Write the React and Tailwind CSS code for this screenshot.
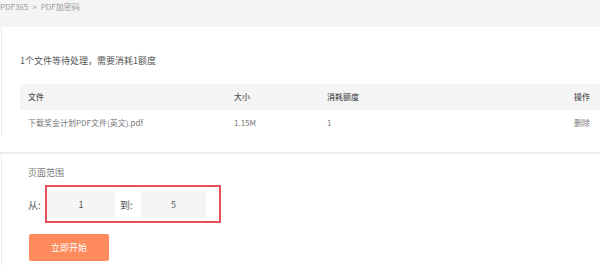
import React from 'react'

function App() {
  const files = [
    { name: '下载奖金计划PDF文件(英文).pdf', size: '1.15M', cost: '1' }
  ]

  return (
    <div className="w-[600px] h-[266px] overflow-hidden bg-white font-['Noto_Sans_CJK_SC','Noto_Sans',sans-serif]">
      {/* Breadcrumb */}
      <div className="h-[27px] bg-[#f4f4f4] text-[8px] leading-[14px] text-[#999] flex gap-[4px]">
        <span>PDF365</span>
        <span>&gt;</span>
        <span>PDF加密码</span>
      </div>

      <div className="ml-px border-l border-[#ececec]">
        {/* Files */}
        <div className="pt-[27px] pl-[18px]">
          <p className="text-[9px] leading-[14px] text-[#555]">1个文件等待处理，需要消耗1额度</p>

          <div className="mt-[16px]">
            <div className="h-[26px] bg-[#f5f5f5] flex items-center pl-[8px] pr-[10px] text-[8px] font-medium text-[#555]">
              <div className="w-[206px]">文件</div>
              <div className="w-[93px]">大小</div>
              <div className="flex-1">消耗额度</div>
              <div>操作</div>
            </div>
            {files.map((f) => (
              <div key={f.name} className="h-[26px] flex items-center pl-[8px] pr-[10px] text-[8px] text-[#777]">
                <div className="w-[206px]">{f.name}</div>
                <div className="w-[93px]">{f.size}</div>
                <div className="flex-1">{f.cost}</div>
                <div>删除</div>
              </div>
            ))}
          </div>
        </div>
      </div>

      <div className="mt-[16px] h-[2px] bg-[#ececec]" />

      {/* Page range */}
      <div className="ml-px border-l border-[#ececec] pl-[26px] pt-[12px] pb-[10px]">
        <p className="text-[9px] leading-[14px] text-[#777]">页面范围</p>

        <div className="mt-[5px] flex items-center">
          <span className="w-[17px] text-[10px] text-[#555]">从:</span>
          <div className="border-2 border-[#e8505a] pt-[4px] pb-[3px] pl-[0px] pr-[13px] flex items-center">
            <div className="w-[68px] h-[27px] bg-[#f5f5f5] flex items-center justify-center text-[9px] text-[#555]">1</div>
            <span className="ml-[5px] w-[21px] text-[10px] text-[#555]">到:</span>
            <div className="w-[65px] h-[27px] bg-[#f5f5f5] flex items-center justify-center text-[9px] text-[#555]">5</div>
          </div>
        </div>

        <button className="mt-[11px] ml-[1px] w-[80px] h-[27px] rounded-[2px] bg-[#ff8a5c] text-white text-[9px] flex items-center justify-center">
          立即开始
        </button>
      </div>
    </div>
  )
}

export default App
